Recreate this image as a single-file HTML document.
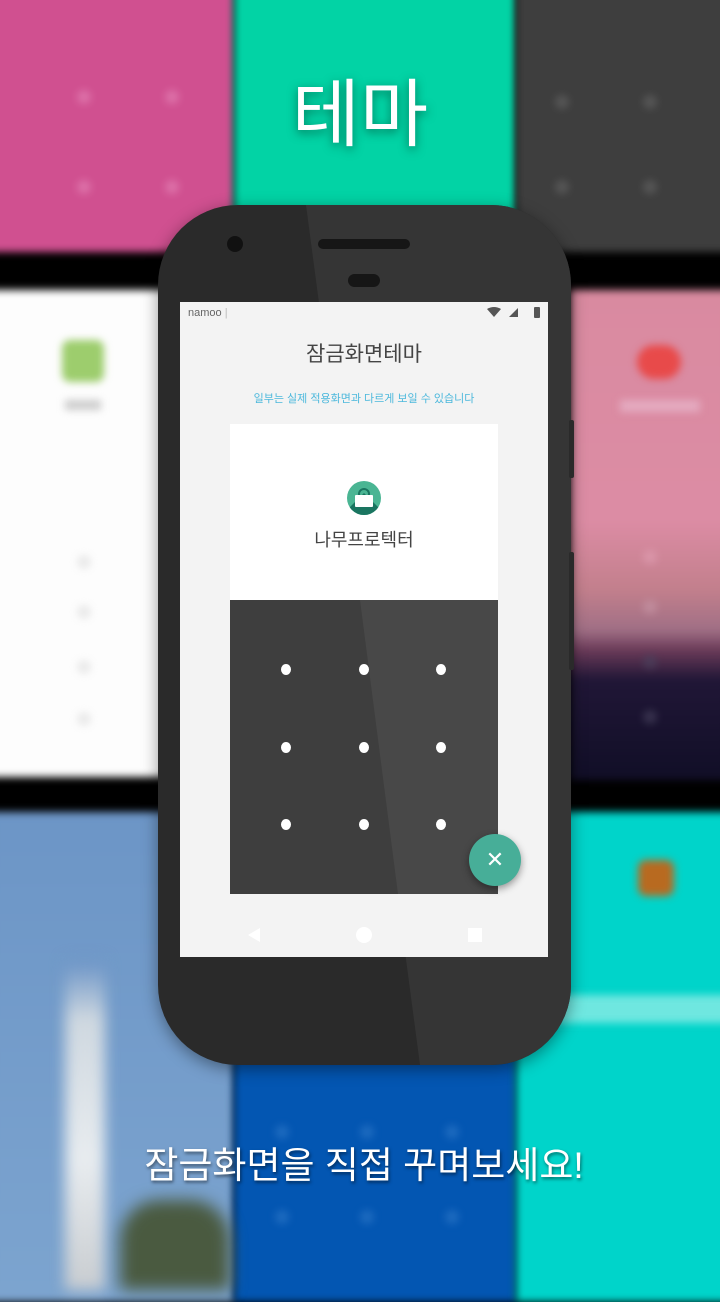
<!DOCTYPE html>
<html><head><meta charset="utf-8"><style>
*{margin:0;padding:0;box-sizing:border-box}
body{width:720px;height:1280px;overflow:hidden;position:relative;background:#000;font-family:"Liberation Sans","Noto Sans CJK KR",sans-serif}
.bg{position:absolute;filter:blur(4px)}
.dot{position:absolute;width:14px;height:14px;border-radius:50%;filter:blur(4px);opacity:.6}
.abs{position:absolute}
</style></head><body>
<div class="bg" style="left:-10px;top:-10px;width:244px;height:262px;background:#d05090"></div>
<div class="bg" style="left:234px;top:-10px;width:282px;height:262px;background:#02d3a5"></div>
<div class="bg" style="left:516px;top:-10px;width:214px;height:262px;background:#3e3e3e"></div>
<div class="bg" style="left:-10px;top:290px;width:244px;height:487px;background:#fdfdfd"></div>
<div class="bg" style="left:234px;top:290px;width:282px;height:487px;background:#e8e8e8"></div>
<div class="bg" style="left:570px;top:290px;width:160px;height:490px;background:linear-gradient(#d98aa0 0,#dc8ca4 230px,#c27f8c 300px,#a06f85 340px,#6a3a58 360px,#201636 390px,#120f28 480px)"></div>
<div class="bg" style="left:-10px;top:812px;width:244px;height:490px;background:linear-gradient(#6c95c6,#7ca4cf)"></div>
<div class="bg" style="left:234px;top:812px;width:282px;height:490px;background:#0356b2"></div>
<div class="bg" style="left:516px;top:812px;width:214px;height:490px;background:#00d4ca"></div>
<div class="bg" style="left:520px;top:995px;width:210px;height:28px;background:#6fe7e0"></div>
<div class="bg" style="left:62px;top:340px;width:42px;height:42px;border-radius:8px;background:#9dcd6d"></div>
<div class="bg" style="left:65px;top:400px;width:36px;height:10px;background:#ccc"></div>
<div class="bg" style="left:637px;top:345px;width:44px;height:34px;border-radius:18px;background:#e84a4a"></div>
<div class="bg" style="left:620px;top:400px;width:80px;height:12px;background:#e4aac0"></div>
<div class="bg" style="left:638px;top:860px;width:36px;height:36px;border-radius:8px;background:#b86a20"></div>
<div class="bg" style="left:65px;top:960px;width:40px;height:330px;filter:blur(7px);background:linear-gradient(#6a93c6,#cfd8e0 60px,#e8ecef 200px,#c8ccd0)"></div>
<div class="bg" style="left:120px;top:1200px;width:110px;height:90px;filter:blur(8px);background:#4a5a40;border-radius:40px 40px 0 0"></div>
<div class="dot" style="left:77px;top:90px;background:#e586b8"></div>
<div class="dot" style="left:165px;top:90px;background:#e586b8"></div>
<div class="dot" style="left:77px;top:180px;background:#e586b8"></div>
<div class="dot" style="left:165px;top:180px;background:#e586b8"></div>
<div class="dot" style="left:555px;top:95px;background:#666"></div>
<div class="dot" style="left:643px;top:95px;background:#666"></div>
<div class="dot" style="left:555px;top:180px;background:#666"></div>
<div class="dot" style="left:643px;top:180px;background:#666"></div>
<div class="dot" style="left:643px;top:550px;background:#e2a0b5"></div>
<div class="dot" style="left:643px;top:600px;background:#c898a8"></div>
<div class="dot" style="left:643px;top:655px;background:#4a4560"></div>
<div class="dot" style="left:643px;top:710px;background:#4a4560"></div>
<div class="dot" style="left:275px;top:1125px;background:#2f78c8"></div>
<div class="dot" style="left:360px;top:1125px;background:#2f78c8"></div>
<div class="dot" style="left:445px;top:1125px;background:#2f78c8"></div>
<div class="dot" style="left:275px;top:1210px;background:#2f78c8"></div>
<div class="dot" style="left:360px;top:1210px;background:#2f78c8"></div>
<div class="dot" style="left:445px;top:1210px;background:#2f78c8"></div>
<div class="dot" style="left:77px;top:555px;background:#ddd"></div>
<div class="dot" style="left:77px;top:605px;background:#ddd"></div>
<div class="dot" style="left:77px;top:660px;background:#ddd"></div>
<div class="dot" style="left:77px;top:712px;background:#ddd"></div>

<div class="abs" style="left:0;top:65px;width:720px;text-align:center;color:#fff;font-size:74px;line-height:100px;text-shadow:0 3px 10px rgba(0,60,40,.6)">테마</div>

<div class="abs" style="left:158px;top:205px;width:413px;height:860px;border-radius:80px;background:#2a2a2a;overflow:hidden;box-shadow:0 4px 16px rgba(0,0,0,.4)">
  <svg class="abs" style="left:0;top:0" width="413" height="860"><polygon points="148,0 413,0 413,860 262,860" fill="#353535"/></svg>
</div>
<div class="abs" style="left:569px;top:420px;width:5px;height:58px;background:#2a2a2a;border-radius:2px"></div>
<div class="abs" style="left:569px;top:552px;width:5px;height:118px;background:#2a2a2a;border-radius:2px"></div>
<div class="abs" style="left:227px;top:236px;width:16px;height:16px;border-radius:50%;background:#111"></div>
<div class="abs" style="left:318px;top:239px;width:92px;height:10px;border-radius:5px;background:#161616"></div>
<div class="abs" style="left:348px;top:274px;width:32px;height:13px;border-radius:7px;background:#161616"></div>

<div class="abs" style="left:180px;top:302px;width:368px;height:655px;background:#f3f3f3;overflow:hidden">
  <div class="abs" style="left:8px;top:5px;font-size:11px;color:#666">namoo <span style="color:#bbb">|</span></div>
  <svg class="abs" style="left:306px;top:4px" width="56" height="14"><path d="M1 3 Q8 -1 15 3 L8 11Z" fill="#555"/><path d="M23 11 L32 2 L32 11Z" fill="#555"/><rect x="48" y="1" width="6" height="11" rx="1" fill="#555"/></svg>
  <div class="abs" style="left:0;top:36px;width:368px;text-align:center;font-size:21px;color:#444">잠금화면테마</div>
  <div class="abs" style="left:0;top:88px;width:368px;text-align:center;font-size:11px;color:#4cb8dc">일부는 실제 적용화면과 다르게 보일 수 있습니다</div>
  <div class="abs" style="left:50px;top:122px;width:268px;height:176px;background:#fff"></div>
  <div class="abs" style="left:167px;top:179px;width:34px;height:34px;border-radius:50%;background:#4ab593;overflow:hidden">
    <div class="abs" style="left:17px;top:12px;width:30px;height:30px;background:#1a7560;transform:rotate(45deg);transform-origin:0 0"></div>
    <div class="abs" style="left:11px;top:7px;width:12px;height:12px;border:2.5px solid #1a7560;border-radius:6px"></div>
    <div class="abs" style="left:8px;top:14px;width:18px;height:12px;background:#fff;border-radius:1px"></div>
  </div>
  <div class="abs" style="left:0;top:224px;width:368px;text-align:center;font-size:18px;color:#444">나무프로텍터</div>
  <div class="abs" style="left:50px;top:298px;width:268px;height:294px;background:#3e3e3e;overflow:hidden">
    <svg class="abs" style="left:0;top:0" width="268" height="294"><polygon points="130,0 268,0 268,294 168,294" fill="#484848"/></svg>
  </div>
  <div class="abs" style="left:101px;top:362px;width:10px;height:11px;border-radius:50%;background:#fff"></div>
  <div class="abs" style="left:179px;top:362px;width:10px;height:11px;border-radius:50%;background:#fff"></div>
  <div class="abs" style="left:256px;top:362px;width:10px;height:11px;border-radius:50%;background:#fff"></div>
  <div class="abs" style="left:101px;top:440px;width:10px;height:11px;border-radius:50%;background:#fff"></div>
  <div class="abs" style="left:179px;top:440px;width:10px;height:11px;border-radius:50%;background:#fff"></div>
  <div class="abs" style="left:256px;top:440px;width:10px;height:11px;border-radius:50%;background:#fff"></div>
  <div class="abs" style="left:101px;top:517px;width:10px;height:11px;border-radius:50%;background:#fff"></div>
  <div class="abs" style="left:179px;top:517px;width:10px;height:11px;border-radius:50%;background:#fff"></div>
  <div class="abs" style="left:256px;top:517px;width:10px;height:11px;border-radius:50%;background:#fff"></div>
  <svg class="abs" style="left:66px;top:624px" width="250" height="18">
    <path d="M2 9 L14 2 L14 16Z" fill="#fff"/><circle cx="118" cy="9" r="8" fill="#fff"/><rect x="222" y="2" width="14" height="14" fill="#fff"/>
  </svg>
</div>
<div class="abs" style="left:469px;top:834px;width:52px;height:52px;border-radius:50%;background:#47ae98;box-shadow:0 3px 8px rgba(0,0,0,.4);color:#fff;font-size:22px;text-align:center;line-height:52px">✕</div>

<div class="abs" style="left:4px;top:1138px;width:720px;text-align:center;color:#fff;font-size:37px;line-height:56px;text-shadow:1px 2px 3px rgba(0,0,0,.5)">잠금화면을 직접 꾸며보세요!</div>
</body></html>
